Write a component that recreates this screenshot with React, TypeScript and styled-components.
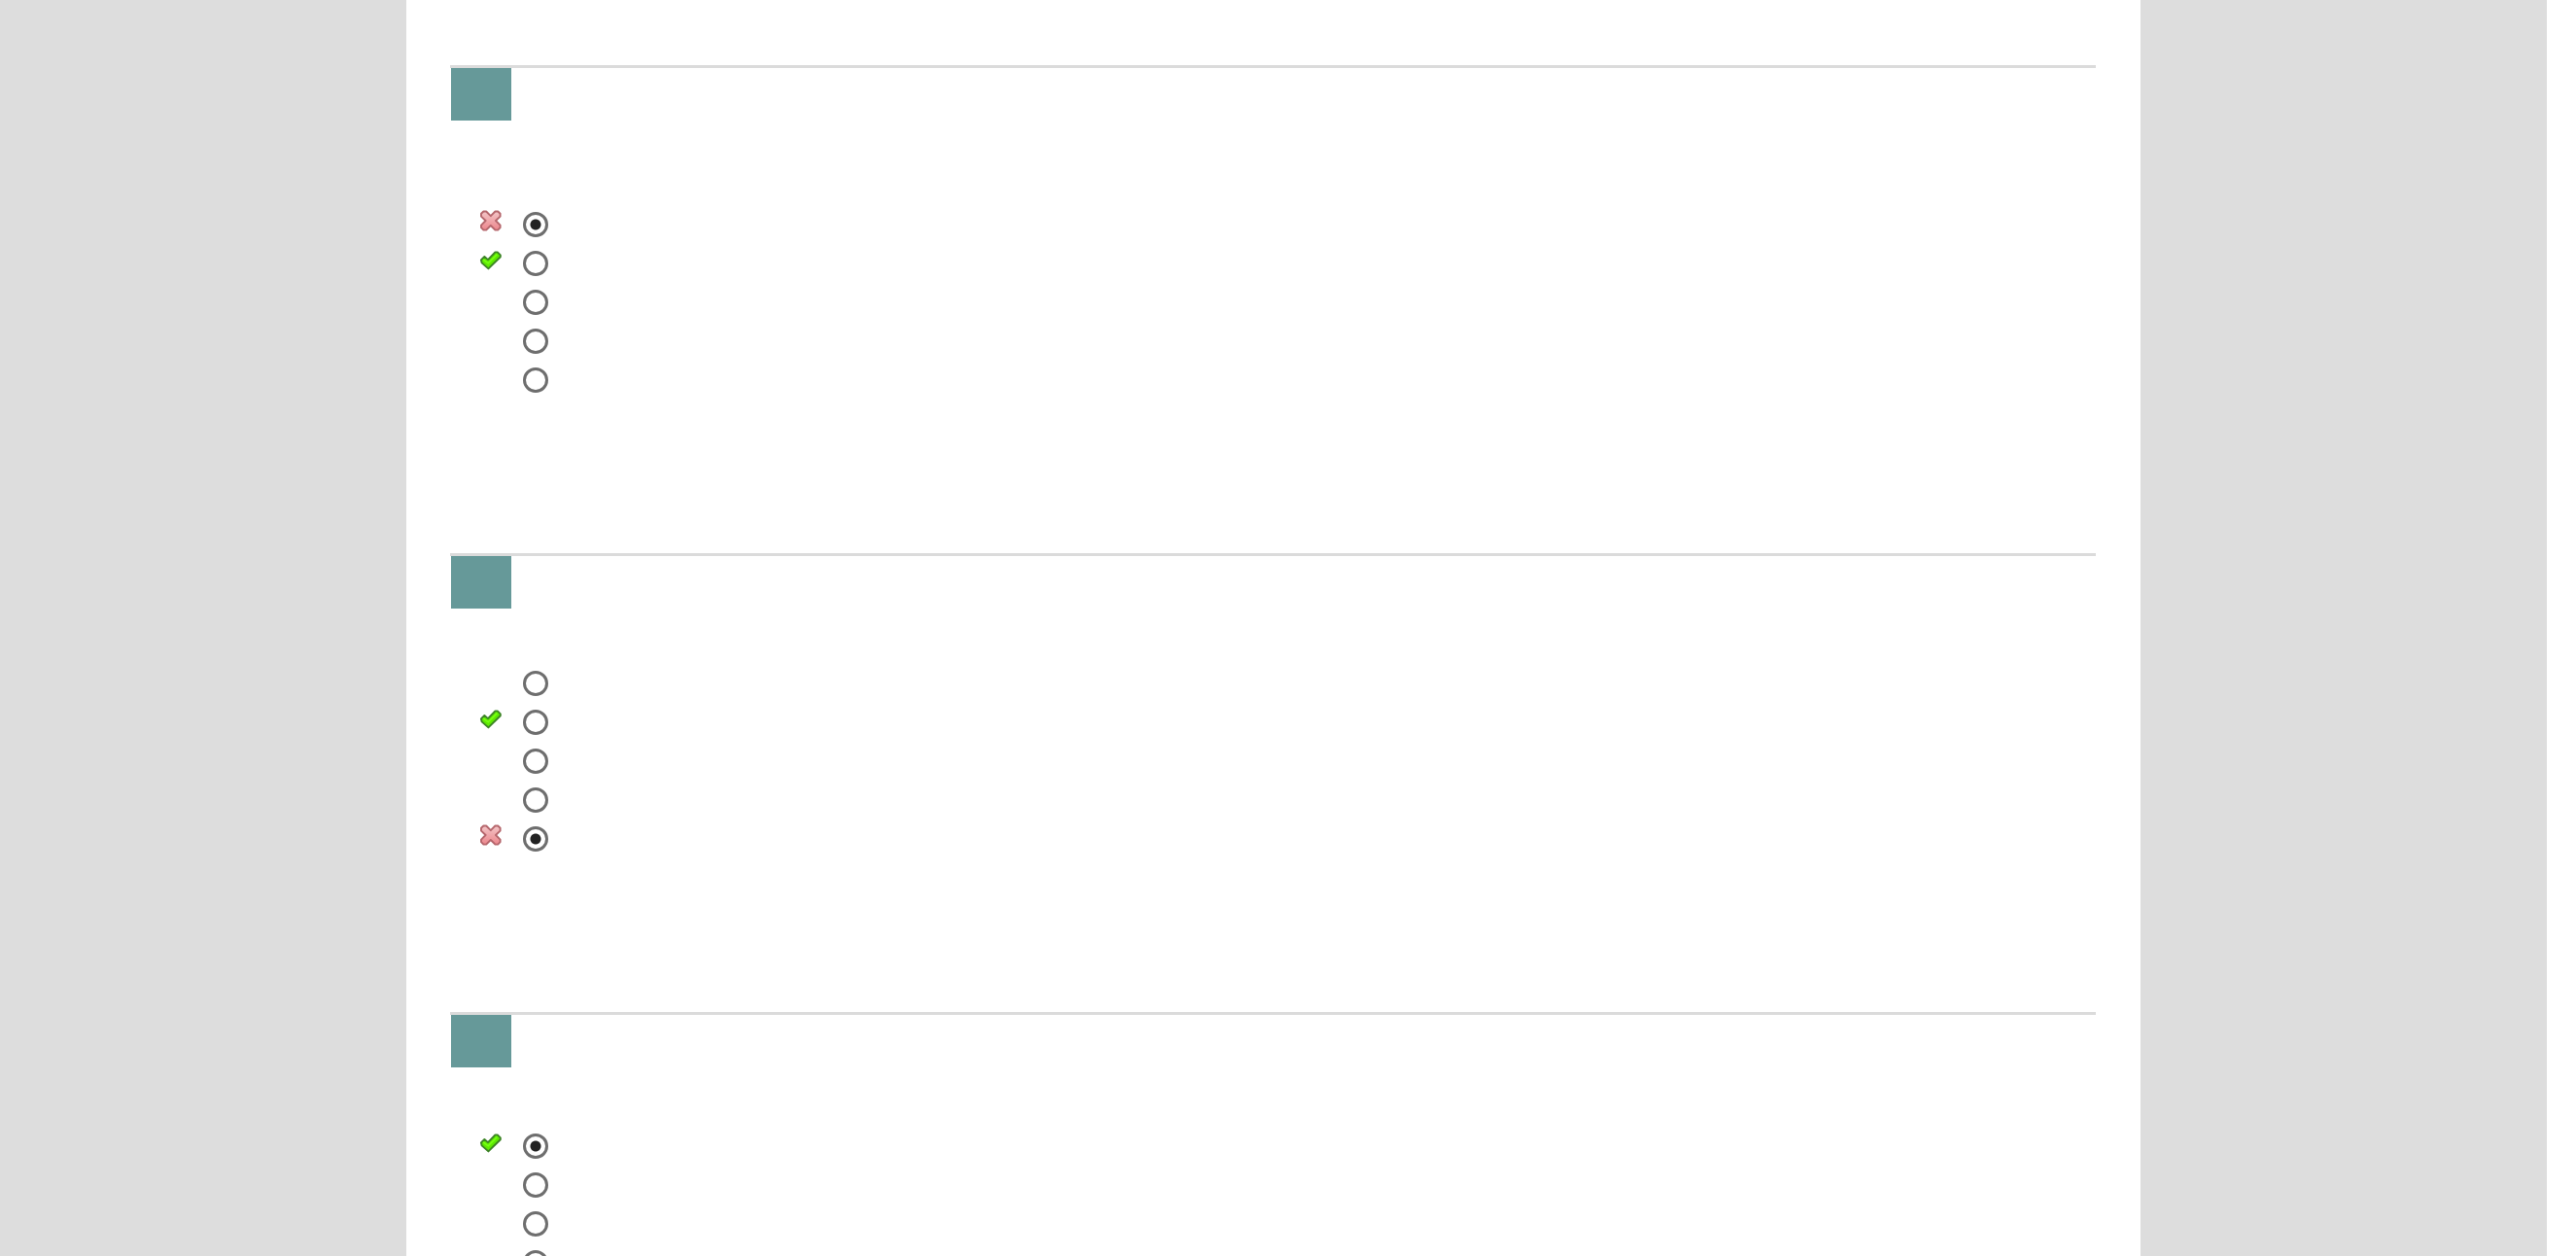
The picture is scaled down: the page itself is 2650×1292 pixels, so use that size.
import React from "react";
import styled, { createGlobalStyle } from "styled-components";

const GlobalStyle = createGlobalStyle`
  *, *::before, *::after { box-sizing: border-box; }
  body {
    margin: 0;
    background: #fff;
    font-family: "Liberation Sans", Arial, sans-serif;
  }
`;

const Viewport = styled.div`
  height: 100vh;
  overflow: hidden;
  padding-right: 30px;
`;

const Backdrop = styled.div`
  background: #ddd;
`;

const Sheet = styled.main`
  max-width: 1784px;
  margin: 0 auto;
  padding: 67px 46px 0 45px;
  background: #fff;
`;

const Question = styled.section`
  border-top: 3px solid #dbdbdb;
  padding-bottom: 158px;
`;

const NumberBadge = styled.div`
  width: 62px;
  height: 54px;
  margin-left: 1px;
  background: #669999;
`;

const Prompt = styled.div<{ $height: number }>`
  height: ${(p) => p.$height}px;
`;

const Choices = styled.div`
  display: flex;
  flex-direction: column;
  padding-left: 30px;
`;

const Choice = styled.label`
  display: flex;
  align-items: flex-start;
  gap: 21px;
  height: 40px;
`;

const MarkSlot = styled.span`
  display: flex;
  width: 24px;
  padding-top: 4px;
`;

const Radio = styled.input`
  appearance: none;
  width: 26px;
  height: 26px;
  margin: 7px 0 0;
  border: 3px solid #6e6e6e;
  border-radius: 50%;
  background: #fff;

  &:checked {
    background: radial-gradient(circle, #222 5px, #fff 6px);
  }
`;

type Mark = "right" | "wrong";

const CheckIcon = () => (
  <svg width="24" height="24" viewBox="0 0 24 24" aria-hidden="true">
    <path
      d="M1.9 12.4L5.4 9L9 12.1L16.4 4.4H18.8L21.8 7.4V9.2L9.4 21.4L2.6 15.4Z"
      fill="#5eea00"
      stroke="#3d8426"
      strokeWidth="1.9"
      strokeLinejoin="round"
    />
    <path d="M4.2 12L9.2 15.8L18.4 6.6" fill="none" stroke="#78ff14" strokeWidth="1.6" />
  </svg>
);

const CrossIcon = () => (
  <svg width="24" height="24" viewBox="0 0 24 24" aria-hidden="true">
    <defs>
      <linearGradient id="cross" x1="0" y1="0" x2="0" y2="1">
        <stop offset="0" stopColor="#f3c6c8" />
        <stop offset="1" stopColor="#ec868c" />
      </linearGradient>
    </defs>
    <path
      d="M4.4 2.5H7.2L11.8 7.2L16.4 2.5H19.2L21.6 4.8V7.6L17 12L21.6 16.6V19.2L19.2 21.6H16.4L11.8 17L7.2 21.6H4.4L2 19.2V16.6L6.6 12L2 7.6V4.8Z"
      fill="url(#cross)"
      stroke="#b5666c"
      strokeWidth="1.9"
      strokeLinejoin="round"
    />
  </svg>
);

interface QuestionData {
  id: string;
  promptHeight: number;
  selected: number;
  marks: (Mark | null)[];
}

const questions: QuestionData[] = [
  { id: "q1", promptHeight: 87, selected: 0, marks: ["wrong", "right", null, null, null] },
  { id: "q2", promptHeight: 57, selected: 4, marks: [null, "right", null, null, "wrong"] },
  { id: "q3", promptHeight: 61, selected: 0, marks: ["right", null, null, null, null] },
];

export default function App() {
  return (
    <>
      <GlobalStyle />
      <Viewport>
        <Backdrop>
          <Sheet>
            {questions.map((q) => (
              <Question key={q.id}>
                <NumberBadge />
                <Prompt $height={q.promptHeight} />
                <Choices role="radiogroup">
                  {q.marks.map((mark, i) => (
                    <Choice key={i}>
                      <MarkSlot>
                        {mark === "right" && <CheckIcon />}
                        {mark === "wrong" && <CrossIcon />}
                      </MarkSlot>
                      <Radio
                        type="radio"
                        name={q.id}
                        aria-label={`Choice ${i + 1}`}
                        defaultChecked={i === q.selected}
                      />
                    </Choice>
                  ))}
                </Choices>
              </Question>
            ))}
          </Sheet>
        </Backdrop>
      </Viewport>
    </>
  );
}
